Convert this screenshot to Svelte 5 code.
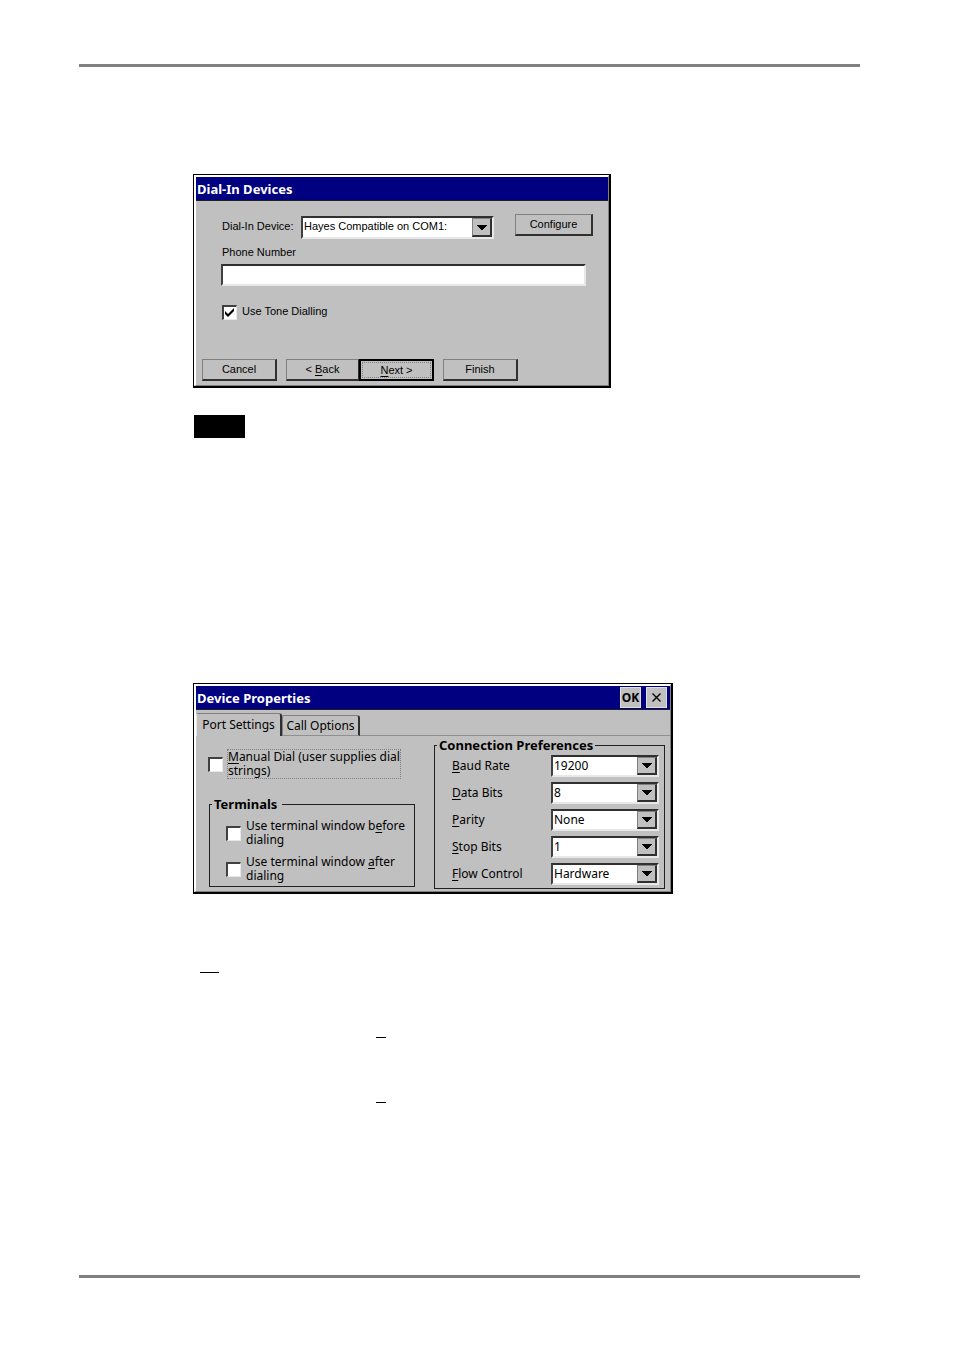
<script lang="ts">
	let device = $state('Hayes Compatible on COM1:');
	let phoneNumber = $state('');
	let toneDialling = $state(true);
	let manualDial = $state(false);
	let activeTab = $state('port');

	// "key" is the underlined access key, "rest" is what follows it
	let preferences = $state([
		{ id: 'baud', key: 'B', rest: 'aud Rate', value: '19200', options: ['9600', '19200', '38400'] },
		{ id: 'data', key: 'D', rest: 'ata Bits', value: '8', options: ['7', '8'] },
		{ id: 'parity', key: 'P', rest: 'arity', value: 'None', options: ['None', 'Odd', 'Even'] },
		{ id: 'stop', key: 'S', rest: 'top Bits', value: '1', options: ['1', '2'] },
		{ id: 'flow', key: 'F', rest: 'low Control', value: 'Hardware', options: ['Hardware', 'Software', 'None'] }
	]);

	let terminals = $state([
		{ id: 'before', lead: 'Use terminal window b', key: 'e', rest: 'fore dialing', checked: false },
		{ id: 'after', lead: 'Use terminal window ', key: 'a', rest: 'fter dialing', checked: false }
	]);
</script>

{#snippet arrow()}
	<span class="arrow">
		<svg width="10" height="5" viewBox="0 0 10 5" shape-rendering="crispEdges">
			<path d="M0 0h10v1H9v1H8v1H7v1H6v1H4V4H3V3H2V2H1V1H0z" />
		</svg>
	</span>
{/snippet}

<div class="page">
	<hr />
	<main>
		<section class="dialog dial-in">
			<div class="frame">
				<h2 class="title">Dial-In Devices</h2>
				<div class="dial-body">
					<div class="fields">
						<div class="device-row">
							<label for="device">Dial-In Device:</label>
							<div class="combo device">
								<select id="device" bind:value={device}>
									<option>Hayes Compatible on COM1:</option>
								</select>
								{@render arrow()}
							</div>
							<button class="btn configure">Configure</button>
						</div>
						<label class="phone-label" for="phone">Phone Number</label>
						<input id="phone" class="phone" type="text" bind:value={phoneNumber} />
						<label class="check tone">
							<input type="checkbox" bind:checked={toneDialling} />
							<svg class="tick" width="9" height="9" viewBox="0 0 9 9">
								<path d="M0 3v3l3 3 6-6V0L3 6z" />
							</svg>
							<span>Use Tone Dialling</span>
						</label>
					</div>
					<div class="buttons">
						<button class="btn">Cancel</button>
						<div class="pair">
							<button class="btn back">&lt; <u>B</u>ack</button>
							<button class="btn default"><span><u>N</u>ext &gt;</span></button>
						</div>
						<button class="btn">Finish</button>
					</div>
				</div>
			</div>
		</section>

		<div class="note"></div>

		<section class="dialog properties">
			<div class="frame">
				<header class="title">
					<h2>Device Properties</h2>
					<button class="cap">OK</button>
					<button class="cap" aria-label="Close">
						<svg width="9" height="9" viewBox="0 0 9 9">
							<path d="M0.5 0.5l8 8M8.5 0.5l-8 8" stroke="#000" stroke-width="1.4" />
						</svg>
					</button>
				</header>
				<div class="tabs">
					<button class="tab" class:active={activeTab === 'port'} onclick={() => (activeTab = 'port')}>
						Port Settings
					</button>
					<button class="tab" class:active={activeTab === 'call'} onclick={() => (activeTab = 'call')}>
						Call Options
					</button>
				</div>
				<div class="panel">
					<div class="left">
						<label class="check manual">
							<input type="checkbox" bind:checked={manualDial} />
							<span class="focus"><u>M</u>anual Dial (user supplies dial<br />strings)</span>
						</label>
						<fieldset class="terminals">
							<legend>Terminals</legend>
							{#each terminals as item (item.id)}
								<label class="check">
									<input type="checkbox" bind:checked={item.checked} />
									<span>{item.lead}<u>{item.key}</u>{item.rest}</span>
								</label>
							{/each}
						</fieldset>
					</div>
					<fieldset class="connection">
						<legend>Connection Preferences</legend>
						{#each preferences as pref (pref.id)}
							<div class="pref">
								<label for={pref.id}><u>{pref.key}</u>{pref.rest}</label>
								<div class="combo">
									<select id={pref.id} bind:value={pref.value}>
										{#each pref.options as option (option)}
											<option>{option}</option>
										{/each}
									</select>
									{@render arrow()}
								</div>
							</div>
						{/each}
					</fieldset>
				</div>
			</div>
		</section>

		<div class="marks">
			<span class="mark wide"></span>
			<span class="mark nested"></span>
			<span class="mark nested"></span>
		</div>
	</main>
	<hr />
</div>

<style>
	:global(body) {
		background: #fff;
	}

	.page,
	.page * {
		box-sizing: border-box;
	}

	.page {
		padding: 64px 94px 70px 79px;
		color: #000;
	}

	hr {
		height: 3px;
		margin: 0;
		border: 0;
		background: #808080;
	}

	main {
		padding: 107px 0 172px 114px;
	}

	h2 {
		margin: 0;
		font-size: inherit;
	}

	button,
	input,
	select {
		margin: 0;
		padding: 0;
		border-radius: 0;
		color: #000;
		font: inherit;
	}

	u {
		text-underline-offset: 2px;
		text-decoration-thickness: 1px;
		text-decoration-skip-ink: none;
	}

	.dialog {
		width: 100%;
		border: solid #000;
		border-width: 1px 2px 2px 1px;
		background: #c0c0c0;
	}

	.frame {
		border: solid;
		border-width: 2px 1px 1px 2px;
		border-color: #fff #808080 #808080 #fff;
	}

	.dial-in {
		max-width: 418px;
		font: 11px/14px 'Liberation Sans', Arial, sans-serif;
	}

	.properties {
		max-width: 480px;
		font: 12px/14px 'Noto Sans', Tahoma, sans-serif;
	}

	.title {
		display: flex;
		align-items: center;
		height: 24px;
		padding: 0 3px 0 1px;
		border-bottom: 1px solid #202020;
		background: #000080;
		color: #fff;
		font: bold 13px/14px 'Noto Sans', Tahoma, sans-serif;
	}

	.title h2 {
		flex: 1;
	}

	.dial-body {
		padding: 13px 15px 4px 6px;
	}

	.fields {
		padding-left: 19px;
	}

	.device-row {
		display: flex;
		align-items: flex-start;
		height: 25px;
	}

	.device-row label {
		width: 80px;
		padding: 5px 0 0 1px;
	}

	.combo {
		display: flex;
		width: 108px;
		height: 22px;
		border: solid;
		border-width: 2px;
		border-color: #303030 #e8e8e8 #e8e8e8 #404040;
		background: #fff;
	}

	.combo.device {
		width: 193px;
		height: 23px;
		margin-top: 2px;
	}

	select {
		flex: 1;
		min-width: 0;
		padding-left: 1px;
		border: 0;
		appearance: none;
		background: #fff;
	}

	.combo.device select {
		padding-bottom: 3px;
	}

	.arrow {
		display: grid;
		place-items: center;
		width: 20px;
		border: solid;
		border-width: 1px 2px 2px 1px;
		border-color: #808080 #303030 #303030 #808080;
		background: #c0c0c0;
		pointer-events: none;
	}

	.btn {
		width: 75px;
		height: 22px;
		padding-bottom: 1px;
		border: solid;
		border-width: 1px 2px 2px 1px;
		border-color: #808080 #303030 #303030 #808080;
		background: #c0c0c0;
	}

	.btn.configure {
		width: 78px;
		margin-left: auto;
	}

	.btn.back {
		width: 73px;
		border-right-width: 1px;
	}

	.btn.default {
		padding: 1px;
		border: 2px solid #000;
	}

	.btn.default span {
		display: block;
		border: 1px dotted #808080;
	}

	.phone-label {
		display: block;
		margin: 6px 0 5px;
		padding-left: 1px;
	}

	.phone {
		display: block;
		width: calc(100% - 7px);
		height: 22px;
		padding: 0 2px;
		border: solid;
		border-width: 2px;
		border-color: #303030 #e8e8e8 #e8e8e8 #404040;
		background: #fff;
	}

	.check {
		display: flex;
		align-items: center;
		gap: 5px;
	}

	.check input {
		flex: none;
		width: 15px;
		height: 15px;
		border: solid;
		border-width: 2px 1px 1px 2px;
		border-color: #404040 #e8e8e8 #e8e8e8 #404040;
		appearance: none;
		background: #fff;
	}

	.tone {
		position: relative;
		align-items: flex-start;
		line-height: 13px;
		margin: 19px 0 39px;
		padding-left: 1px;
	}

	.tick {
		display: none;
		position: absolute;
		top: 3px;
		left: 4px;
	}

	.tone input:checked + .tick {
		display: block;
	}

	.buttons {
		display: flex;
		gap: 9px;
	}

	.pair {
		display: flex;
	}

	.note {
		width: 51px;
		height: 23px;
		margin: 27px 0 245px 1px;
		background: #000;
	}

	.cap {
		display: grid;
		place-items: center;
		width: 21px;
		height: 21px;
		margin-left: 5px;
		border: 1px solid #e0e0e0;
		background: #c0c0c0;
		font-size: 12px;
	}

	.tabs {
		display: flex;
		align-items: flex-end;
		height: 26px;
		padding-top: 3px;
		box-shadow: inset 0 -1px #909090;
	}

	.tab {
		width: 78px;
		height: 21px;
		border: solid;
		border-width: 1px 2px 0 1px;
		border-color: #808080 #303030 #303030 #808080;
		border-radius: 2px 3px 0 0;
		background: #c0c0c0;
		white-space: nowrap;
	}

	.tab:not(.active) {
		border-bottom: 1px solid #909090;
	}

	.tab.active {
		width: 86px;
		height: 23px;
		border-left-color: #e8e8e8;
	}

	.panel {
		display: flex;
		gap: 19px;
		padding: 2px 5px 2px 11px;
	}

	.left {
		flex: 1;
		padding-top: 11px;
	}

	.manual {
		gap: 4px;
		margin-bottom: 18px;
		padding-left: 1px;
	}

	.manual .focus {
		border: 1px dotted #808080;
		white-space: nowrap;
	}

	fieldset {
		min-width: 0;
		margin: 0;
		border: 1px solid #202020;
	}

	legend {
		padding: 0 2px;
		font-size: 13px;
		font-weight: bold;
	}

	.terminals {
		display: grid;
		gap: 8px;
		margin-left: 2px;
		padding: 8px 8px 3px 16px;
	}

	.terminals legend {
		margin-left: -14px;
		padding-right: 5px;
	}

	.connection {
		display: grid;
		gap: 5px;
		width: 231px;
		padding: 3px 5px 3px 17px;
	}

	.connection legend {
		margin-left: -15px;
	}

	.pref {
		display: flex;
		align-items: center;
		justify-content: space-between;
	}

	.marks {
		display: grid;
		gap: 64px;
		padding: 78px 0 0 7px;
	}

	.mark {
		width: 10px;
		height: 1px;
		background: #000;
	}

	.mark.wide {
		width: 19px;
	}

	.mark.nested {
		margin-left: 176px;
	}
</style>
